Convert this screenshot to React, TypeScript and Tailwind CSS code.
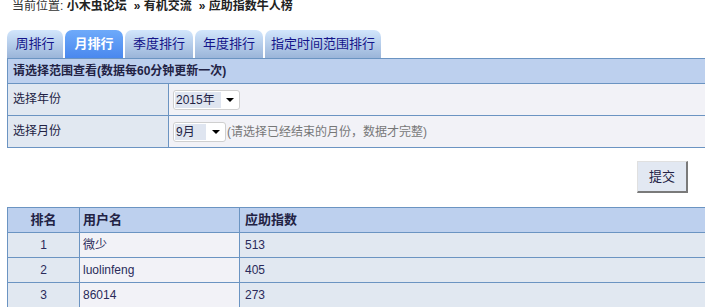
import React from 'react';

const tabs = ['周排行', '月排行', '季度排行', '年度排行', '指定时间范围排行'];

const rows = [
  { rank: 1, name: '微少', score: 513 },
  { rank: 2, name: 'luolinfeng', score: 405 },
  { rank: 3, name: '86014', score: 273 },
];

const FakeSelect: React.FC<{ value: string; width: string; textWidth: string }> = ({ value, width, textWidth }) => (
  <div className={`flex items-center h-[20px] ${width} bg-white border border-[#cfcfcf] rounded-[3px] pl-[1px]`}>
    <span className={`${textWidth} h-[16px] leading-[16px] bg-[#dfe5f0] text-[#222244] pl-[1px]`}>{value}</span>
    <span className="ml-auto mr-[5px] w-0 h-0 border-l-[4px] border-r-[4px] border-t-[4px] border-l-transparent border-r-transparent border-t-black"></span>
  </div>
);

const App: React.FC = () => {
  return (
    <div
      className="w-[705px] h-[307px] overflow-hidden bg-white text-[12px] text-[#2a2a5a]"
      style={{ fontFamily: '"Liberation Sans", "Noto Sans CJK SC", sans-serif' }}
    >
      {/* breadcrumb */}
      <div className="h-[30px] pl-[12px] leading-[13px] text-[#333]">
        当前位置: <b className="text-[#222]">小木虫论坛</b>
        <b className="ml-[7px] text-[#222]">» 有机交流</b>
        <b className="ml-[7px] text-[#222]">» 应助指数牛人榜</b>
      </div>

      {/* tabs */}
      <div className="flex gap-[2px] pl-[7px] h-[28px]">
        {tabs.map((t, i) =>
          i === 1 ? (
            <div
              key={t}
              className="h-[28px] w-[58px] rounded-t-[7px] bg-gradient-to-b from-[#6eaafa] to-[#4a88ee] text-white font-bold text-[13px] flex items-center justify-center"
            >
              {t}
            </div>
          ) : (
            <div
              key={t}
              className={`h-[28px] ${i === 0 ? 'w-[56px]' : i === 4 ? 'w-[116px]' : 'w-[68px]'} rounded-t-[7px] bg-gradient-to-b from-[#d2e6fc] to-[#9bb5d9] text-[#14148a] text-[13px] flex items-center justify-center`}
            >
              {t}
            </div>
          )
        )}
      </div>

      {/* form */}
      <div className="ml-[7px] w-[760px] border-t border-l border-[#6b94c2]">
        <div className="h-[25px] bg-[#bdd0ee] border-b border-[#6b94c2] pl-[5px] flex items-center font-bold text-[#222244]">
          请选择范围查看(数据每60分钟更新一次)
        </div>
        <div className="flex h-[32px] border-b border-[#6b94c2]">
          <div className="w-[161px] bg-[#e1e8f1] border-r border-[#6b94c2] pl-[5px] pb-[2px] flex items-center text-[#222244]">选择年份</div>
          <div className="flex-1 bg-[#f2f2f7] pl-[4px] flex items-center">
            <FakeSelect value="2015年" width="w-[67px]" textWidth="w-[46px]" />
          </div>
        </div>
        <div className="flex h-[32px] border-b border-[#6b94c2]">
          <div className="w-[161px] bg-[#e1e8f1] border-r border-[#6b94c2] pl-[5px] pb-[2px] flex items-center text-[#222244]">选择月份</div>
          <div className="flex-1 bg-[#f2f2f7] pl-[4px] flex items-center">
            <FakeSelect value="9月" width="w-[53px]" textWidth="w-[31px]" />
            <span className="ml-[1px] text-[#777]">(请选择已经结束的月份，数据才完整)</span>
          </div>
        </div>
      </div>

      {/* submit */}
      <div className="flex justify-end pr-[17px] pt-[13px] h-[59px]">
        <button className="w-[51px] h-[32px] bg-[#e2e8f2] border-t border-l border-[#e0e0e0] border-r-2 border-b-2 border-r-[#7a7a7a] border-b-[#7a7a7a] text-[13px] text-[#222244]">
          提交
        </button>
      </div>

      {/* ranking */}
      <div className="ml-[7px] w-[760px] border-t border-l border-[#6b94c2]">
        <div className="flex h-[25px] bg-[#bdd0ee] border-b border-[#6b94c2] font-bold text-[#222244] text-[13px]">
          <div className="w-[72px] border-r border-[#6b94c2] flex items-center justify-center">排名</div>
          <div className="w-[160px] border-r border-[#6b94c2] pl-[3px] flex items-center">用户名</div>
          <div className="flex-1 pl-[5px] flex items-center">应助指数</div>
        </div>
        {rows.map((r) => (
          <div key={r.rank} className="flex h-[25px] border-b border-[#6b94c2]">
            <div className="w-[72px] bg-[#e1e8f1] border-r border-[#6b94c2] flex items-center justify-center">{r.rank}</div>
            <div className="w-[160px] bg-[#f2f2f7] border-r border-[#6b94c2] pl-[3px] flex items-center">{r.name}</div>
            <div className="flex-1 bg-[#e1e8f1] pl-[5px] flex items-center">{r.score}</div>
          </div>
        ))}
      </div>
    </div>
  );
};

export default App;
